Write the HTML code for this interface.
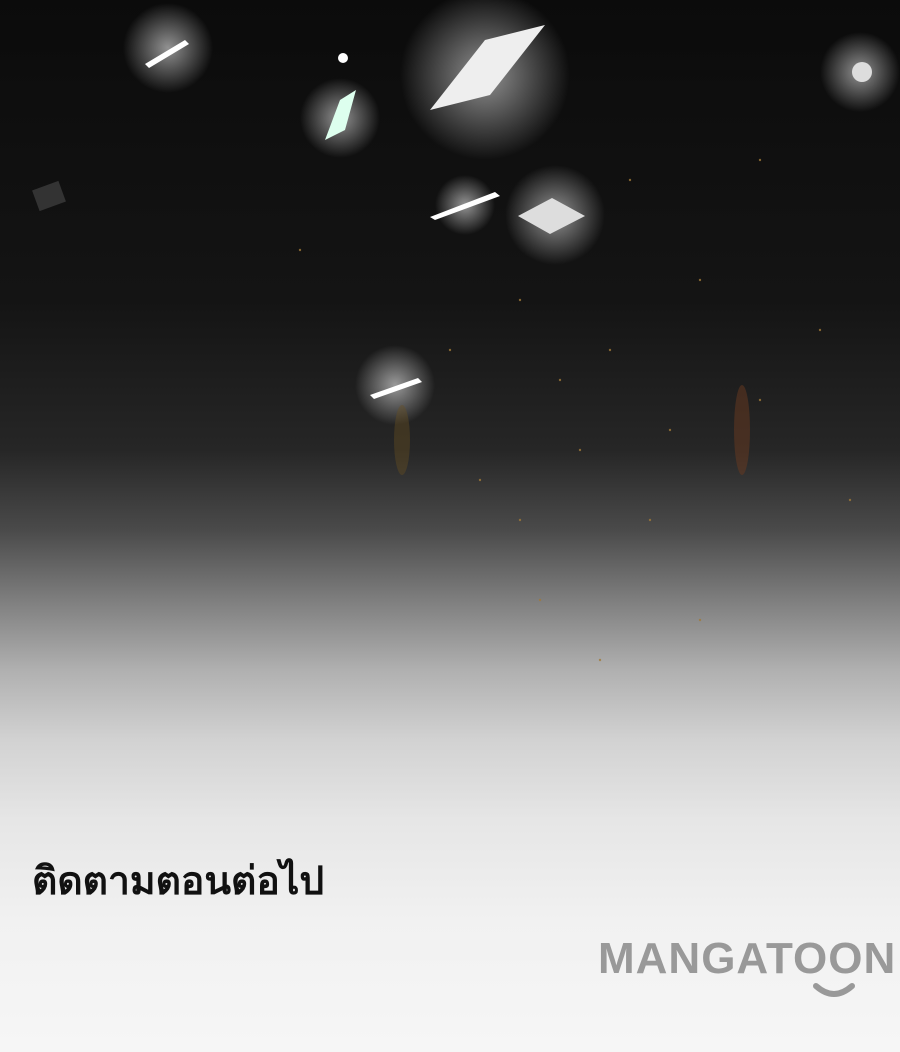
<!DOCTYPE html>
<html><head><meta charset="utf-8"><style>
html,body{margin:0;padding:0}
body{width:900px;height:1052px;position:relative;overflow:hidden;
background:linear-gradient(to bottom,#0b0b0b 0px,#141414 300px,#262626 450px,#4a4a4a 530px,#7e7e7e 600px,#b0b0b0 670px,#d2d2d2 740px,#e6e6e6 820px,#f1f1f1 920px,#f6f6f6 1052px);}
.t{position:absolute;left:32px;top:850px;font:bold 39px "Liberation Sans","Noto Sans CJK SC",sans-serif;color:#111;}
.logo{position:absolute;left:598px;top:934px;font:900 44px "Liberation Sans",sans-serif;color:#999;letter-spacing:1px;}
</style></head><body>
<svg width="900" height="1052" style="position:absolute;left:0;top:0">
<defs>
<radialGradient id="g"><stop offset="0" stop-color="#fff" stop-opacity=".55"/><stop offset="1" stop-color="#fff" stop-opacity="0"/></radialGradient>
</defs>
<circle cx="485" cy="75" r="85" fill="url(#g)"/>
<circle cx="555" cy="215" r="50" fill="url(#g)"/>
<circle cx="168" cy="48" r="45" fill="url(#g)"/>
<circle cx="860" cy="72" r="40" fill="url(#g)"/>
<circle cx="340" cy="118" r="40" fill="url(#g)"/>
<circle cx="395" cy="385" r="40" fill="url(#g)"/>
<circle cx="465" cy="205" r="30" fill="url(#g)"/>
<polygon points="430,110 485,40 545,25 490,95" fill="#eee"/>
<polygon points="518,216 552,198 585,216 550,234" fill="#ddd"/>
<polygon points="325,140 340,100 356,90 345,130" fill="#dfe"/>
<polygon points="145,64 185,40 189,44 149,68" fill="#fff"/>
<polygon points="430,217 495,192 500,196 435,220" fill="#fff"/>
<polygon points="370,395 418,378 422,382 374,399" fill="#fff"/>
<circle cx="343" cy="58" r="5" fill="#fff"/>
<circle cx="862" cy="72" r="10" fill="#ddd"/>
<rect x="35" y="185" width="28" height="22" fill="#333" transform="rotate(-20 49 196)"/>
<g fill="#a07a3a" opacity=".8">
<circle cx="520" cy="300" r="1.2"/><circle cx="610" cy="350" r="1.2"/><circle cx="700" cy="280" r="1.2"/><circle cx="580" cy="450" r="1.2"/><circle cx="650" cy="520" r="1.2"/><circle cx="760" cy="400" r="1.2"/><circle cx="480" cy="480" r="1.2"/><circle cx="820" cy="330" r="1.2"/><circle cx="540" cy="600" r="1.2"/><circle cx="700" cy="620" r="1.2"/><circle cx="450" cy="350" r="1.2"/><circle cx="630" cy="180" r="1.2"/><circle cx="760" cy="160" r="1.2"/><circle cx="300" cy="250" r="1.2"/><circle cx="560" cy="380" r="1.2"/><circle cx="850" cy="500" r="1.2"/><circle cx="670" cy="430" r="1.2"/><circle cx="520" cy="520" r="1.2"/><circle cx="600" cy="660" r="1.2"/>
</g>
<ellipse cx="742" cy="430" rx="8" ry="45" fill="#6a3a20" opacity=".5"/>
<ellipse cx="402" cy="440" rx="8" ry="35" fill="#6a5020" opacity=".4"/>
</svg>
<div class="t">ติดตามตอนต่อไป</div>
<div class="logo">MANGATOON</div>
<svg style="position:absolute;left:812px;top:982px" width="44" height="20"><path d="M4 4 Q22 20 40 4" stroke="#999" stroke-width="6" fill="none" stroke-linecap="round"/></svg>
</body></html>
